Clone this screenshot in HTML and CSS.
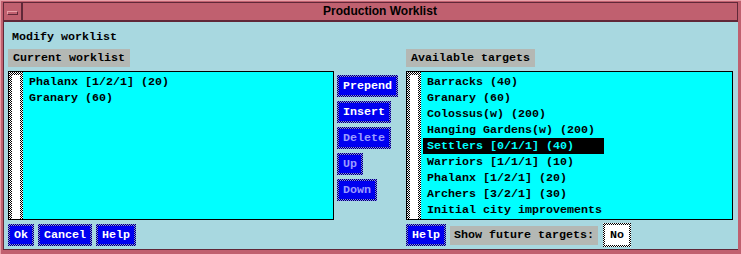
FILE: index.html
```html
<!DOCTYPE html>
<html lang="en">
<head>
    <meta charset="UTF-8">
    <title>Production Worklist</title>
    <link rel="stylesheet" href="styles.css">
</head>
<body>
    <div class="window">
        <div class="titlebar">
            <div class="menu-btn"><span class="menu-bar"></span></div>
            <div class="title">Production Worklist</div>
        </div>
        <div class="content">
            <div class="heading">Modify worklist</div>
            <div class="panes">
                <div class="label">Current worklist</div>
                <div></div>
                <div class="label">Available targets</div>

                <div class="list">
                    <div class="scroll"></div>
                    <div class="items">
                        <div class="item">Phalanx [1/2/1] (20)</div>
                        <div class="item">Granary (60)</div>
                    </div>
                </div>
                <div class="middle">
                    <button class="button">Prepend</button>
                    <button class="button">Insert</button>
                    <button class="button disabled">Delete</button>
                    <button class="button disabled">Up</button>
                    <button class="button disabled">Down</button>
                </div>
                <div class="list">
                    <div class="scroll"></div>
                    <div class="items">
                        <div class="item">Barracks (40)</div>
                        <div class="item">Granary (60)</div>
                        <div class="item">Colossus(w) (200)</div>
                        <div class="item">Hanging Gardens(w) (200)</div>
                        <div class="item selected">Settlers [0/1/1] (40)</div>
                        <div class="item">Warriors [1/1/1] (10)</div>
                        <div class="item">Phalanx [1/2/1] (20)</div>
                        <div class="item">Archers [3/2/1] (30)</div>
                        <div class="item">Initial city improvements</div>
                    </div>
                </div>

                <div class="bottom">
                    <button class="button">Ok</button>
                    <button class="button">Cancel</button>
                    <button class="button">Help</button>
                </div>
                <div></div>
                <div class="bottom">
                    <button class="button">Help</button>
                    <div class="label small">Show future targets:</div>
                    <button class="toggle">No</button>
                </div>
            </div>
        </div>
    </div>
</body>
</html>
```

FILE: styles.css
```css
body {
    margin: 0;
    background-color: #c0606f;
    font-family: "Liberation Mono", "DejaVu Sans Mono", monospace;
    font-size: 11.67px;
    font-weight: bold;
    color: #000;
}
.window {
    width: 741px;
    height: 254px;
    box-sizing: border-box;
    border-top: 1px solid #e8a0a8;
    border-left: 1px solid #e8a0a8;
    padding: 1px 3px 4px 2px;
    display: flex;
    flex-direction: column;
}
.titlebar {
    height: 17px;
    display: flex;
    border: 1px solid #602838;
    border-bottom-width: 2px;
    background-color: #c0606f;
}
.menu-btn {
    width: 17px;
    border-right: 2px solid #602838;
    display: flex;
    align-items: center;
    justify-content: center;
}
.menu-bar {
    width: 9px;
    height: 2px;
    border: 1px solid #e8a0a8;
    border-bottom-color: #602838;
    border-right-color: #602838;
    margin-top: 3px;
}
.title {
    flex: 1;
    text-align: center;
    font-family: "Liberation Sans", Arial, sans-serif;
    font-size: 12px;
    line-height: 17px;
}
.content {
    flex: 1;
    background-color: #a8d8e0;
    padding: 7px 4px 0 4px;
    border-left: 1px solid #602838;
    border-bottom: 1px solid #602838;
}
.heading {
    line-height: 16px;
    padding-left: 4px;
}
.panes {
    display: grid;
    grid-template-columns: 326px 72px 327px;
    grid-template-rows: 22px 149px auto;
    margin-top: 4px;
}
.label {
    background-color: #b4b8b4;
    height: 18px;
    line-height: 18px;
    padding: 0 5px;
    justify-self: start;
}
.label.small {
    height: 19px;
    line-height: 19px;
    padding: 0 4px;
}
.list {
    border: 1px solid #000;
    background-color: #00ffff;
    display: flex;
}
.scroll {
    width: 8px;
    border: 3px solid transparent;
    border-bottom: 0;
    background: linear-gradient(#fff, #fff) padding-box,
        repeating-conic-gradient(#000 0 25%, #fff 0 50%) 0 0 / 2px 2px border-box;
}
.items {
    align-self: flex-start;
    margin: 2px 0 0 2px;
}
.item {
    height: 16px;
    line-height: 16px;
    padding: 0 2px 0 4px;
}
.item.selected {
    background-color: #000;
    color: #00ffff;
}
.middle {
    display: flex;
    flex-direction: column;
    align-items: flex-start;
    gap: 4px;
    padding: 4px 0 0 3px;
}
.button {
    font-family: inherit;
    font-size: inherit;
    font-weight: bold;
    color: #fff;
    height: 22px;
    padding: 0 4px;
    border: 2px solid transparent;
    background: linear-gradient(#0000f0, #0000f0) padding-box,
        repeating-conic-gradient(#000060 0 25%, #8080ff 0 50%) 0 0 / 2px 2px border-box;
    cursor: pointer;
}
.button.disabled {
    color: #9c9cff;
    cursor: not-allowed;
}
.bottom {
    display: flex;
    align-items: center;
    gap: 4px;
    margin-top: 3px;
}
.bottom .button {
    height: 22px;
}
.toggle {
    font-family: inherit;
    font-size: inherit;
    font-weight: bold;
    height: 24px;
    padding: 0 5px;
    margin-left: 1px;
    border: 2px solid transparent;
    background: linear-gradient(#fff, #fff) padding-box,
        repeating-conic-gradient(#000 0 25%, #fff 0 50%) 0 0 / 2px 2px border-box;
    cursor: pointer;
}
```
